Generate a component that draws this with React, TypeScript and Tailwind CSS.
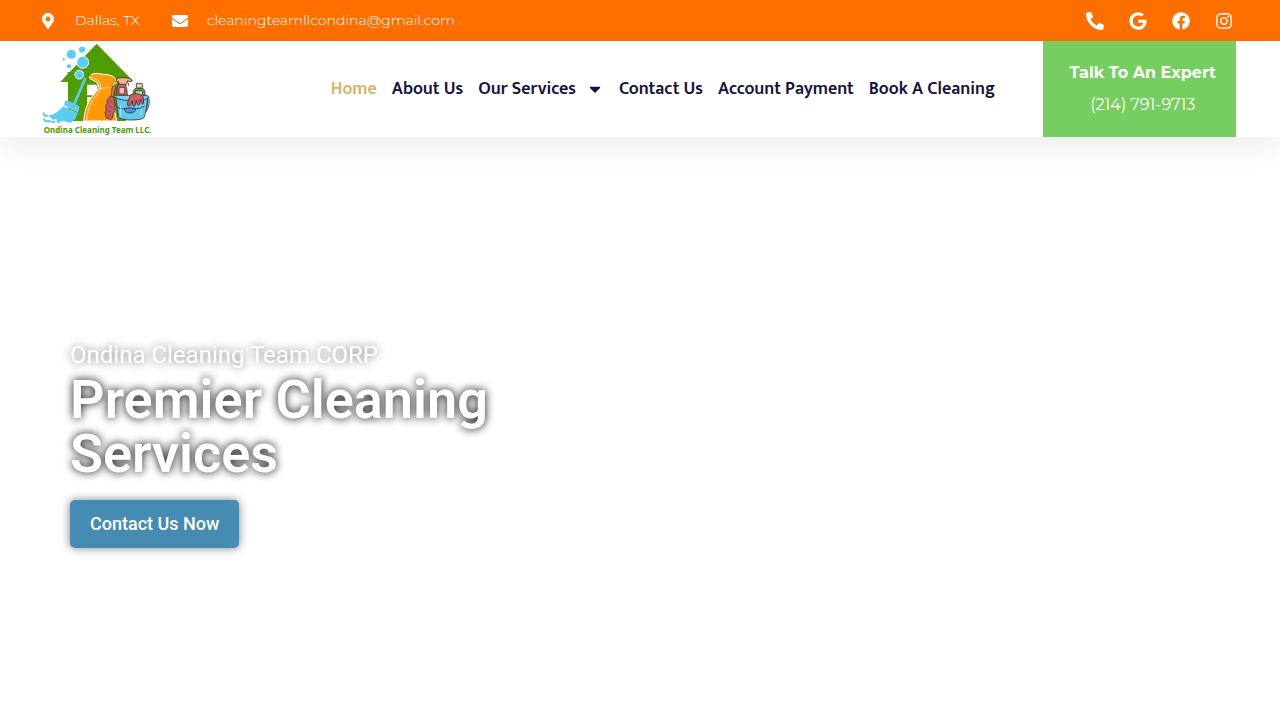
import { FaCaretDown, FaEnvelope, FaFacebook, FaGoogle, FaInstagram, FaMapMarkerAlt, FaPhoneAlt } from "react-icons/fa";

const socials = [
  { label: "Phone", href: "tel:+12147919713", Icon: FaPhoneAlt },
  { label: "Google", href: "#google", Icon: FaGoogle },
  { label: "Facebook", href: "#facebook", Icon: FaFacebook },
  { label: "Instagram", href: "#instagram", Icon: FaInstagram },
];

const links = [
  { label: "Home", active: true },
  { label: "About Us" },
  { label: "Our Services", menu: true },
  { label: "Contact Us" },
  { label: "Account Payment" },
  { label: "Book A Cleaning" },
];

function Logo() {
  return (
    <svg viewBox="36 15 336 288" className="h-24 w-28" role="img" aria-label="Ondina Cleaning Team LLC.">
      {/* House */}
      <path d="M200 23 L310 136 H288 V255 H114 V138 H91 L113 114 V108 H119 Z" fill="#4f9c05" />
      <path d="M171 146 H202 V178 H171 Z M171 183 H202 V214 H171 Z" fill="#fff" />
      {/* Bubbles */}
      <g fill="#5bcbf7" stroke="#fff" strokeWidth="3">
        <circle cx="124" cy="55" r="15" />
        <circle cx="156" cy="41" r="11" />
        <circle cx="158" cy="79" r="18" />
        <circle cx="117" cy="91" r="8" />
        <circle cx="148" cy="116" r="13" />
        <circle cx="101" cy="70" r="5" />
      </g>
      {/* Broom */}
      <path d="M165 129 L131 208" stroke="#5bcbf7" strokeWidth="8" strokeLinecap="round" />
      <path d="M105 196 Q110 191 118 196 L143 208 Q150 212 147 219 L144 227 L102 208 Z" fill="#5bcbf7" />
      <path d="M101 208 L144 227" stroke="#fff" strokeWidth="1.5" />
      <path d="M99 211 L143 230 Q139 250 121 261 Q108 258 102 254 L94 257 Q83 255 78 249 L69 251 Q62 247 59 239 Q85 231 99 211 Z" fill="#5bcbf7" />
      <path d="M41 232 Q42 241 51 239 M42 251 Q48 259 59 255 M59 239 Q66 246 73 243 M65 257 H73 M82 255 L87 259" stroke="#5bcbf7" strokeWidth="6" strokeLinecap="round" fill="none" />
      {/* Large spray bottle */}
      <path d="M178 122 Q184 112 199 112 L237 117 Q249 119 257 127 L260 139 L252 147 Q244 164 246 185 L260 255 H161 Q164 210 188 180 L207 157 Q207 146 199 138 L180 128 Z" fill="#ff9b08" stroke="#fff" strokeWidth="3" />
      <path d="M207 158 L244 154" stroke="#fff" strokeWidth="1.5" />
      <path d="M183 123 L203 133 Q214 143 212 158 Q206 173 193 187 Q173 212 170 253" stroke="#fff" strokeWidth="2" fill="none" />
      <g stroke="#3d3030" strokeWidth="2.5" strokeLinejoin="round">
        {/* Red spray bottle */}
        <path d="M266 141 Q258 160 260 181 H292 Q293 159 284 141 Z" fill="#d65a62" />
        <path d="M260 127 Q278 122 298 127 L306 132 L302 138 L293 134 L289 145 H267 L266 137 L259 136 Z" fill="#f2b391" />
        <path d="M292 137 Q297 142 295 150" fill="none" />
        <rect x="267" y="154" width="17" height="20" rx="3" fill="#f4c0b5" />
        {/* Green bottle */}
        <path d="M319 156 Q309 159 309 181 H345 Q347 159 336 156 Z" fill="#55aa62" />
        <rect x="319" y="142" width="18" height="14" rx="2" fill="#f4d29b" />
        <rect x="316" y="164" width="22" height="14" rx="2" fill="#b9dd9d" />
        {/* Bucket */}
        <path d="M354 184 Q360 209 344 229" fill="none" strokeWidth="7" />
        <path d="M354 184 Q360 209 344 229" fill="none" stroke="#62c9f0" strokeWidth="3" />
        <path d="M258 182 H353 Q350 223 342 245 Q335 252 302 252 Q272 251 265 243 Z" fill="#62c9f0" />
        <path d="M253 180 Q254 177 264 178 H350 Q359 180 354 186 Q346 194 302 194 Q261 193 253 180 Z" fill="#74d3f4" />
        <path d="M259 213 Q272 219 285 219 Q300 214 315 219 Q333 218 344 210" fill="none" />
        <path d="M283 218 Q300 213 316 218 Q317 230 300 231 Q283 230 283 218 Z" fill="#4a91dc" />
        {/* Glove */}
        <path d="M304 175 Q326 169 339 181 L341 201 Q338 208 334 201 L331 190 L329 205 Q324 211 321 202 L319 193 L315 209 Q309 215 307 205 L308 193 L301 208 Q292 213 292 204 L297 187 Z" fill="#d65a62" />
        {/* Duster */}
        <path d="M247 152 Q255 146 257 153 L249 184 H243 Z" fill="#e3833e" />
        <path d="M239 183 L245 180 L250 185 L254 191 L252 198 L256 206 L252 215 L254 224 L249 235 L247 245 L241 252 L235 247 L229 246 L227 238 L225 230 L229 220 L227 210 L232 202 L231 193 Z" fill="#cf5962" />
        <path d="M240 193 L245 198 M237 209 L244 214 M234 224 L243 228 M235 238 L240 240" fill="none" strokeWidth="2" />
        <path d="M272 208 V240 M335 217 L331 240" fill="none" stroke="#a4e7fb" strokeWidth="3" />
      </g>
      <text x="203" y="292" textAnchor="middle" fill="#4f9c05" className="font-['Noto_Sans',sans-serif] text-[24px] font-bold">Ondina Cleaning Team LLC.</text>
    </svg>
  );
}

export default function App() {
  return (
    <div className="min-h-screen bg-white font-['Montserrat','Inter',sans-serif]">
      <div className="flex h-[41px] items-center justify-between bg-[#ff6f00] pr-[47px] pl-10 text-white">
        <address className="flex items-center gap-8 text-sm leading-[21px] font-light not-italic">
          <span className="flex items-center gap-[19px]">
            <FaMapMarkerAlt className="size-4" aria-hidden="true" />
            <span>Dallas, TX</span>
          </span>
          <a href="mailto:cleaningteamllcondina@gmail.com" className="flex items-center gap-[19px]">
            <FaEnvelope className="size-4" aria-hidden="true" />
            <span>cleaningteamllcondina@gmail.com</span>
          </a>
        </address>
        <div className="flex items-center gap-[25px]">
          {socials.map(({ label, href, Icon }) => (
            <a key={label} href={href} aria-label={label}>
              <Icon className="size-[18px]" />
            </a>
          ))}
        </div>
      </div>

      <header className="flex h-24 items-center justify-between bg-white pr-11 pl-[42px] shadow-[0_10px_30px_0_rgba(0,0,0,0.08)]">
        <a href="#home"><Logo /></a>
        <div className="flex h-full items-center gap-12">
          <nav className="flex items-center gap-[15px] font-['Mukta','Noto_Sans',sans-serif] text-lg font-semibold text-[#14123f]">
            {links.map(({ label, active, menu }) => (
              <a key={label} href="#" className={active ? "text-[#d5b26d]" : "flex items-center gap-[10px]"}>
                {label}
                {menu && <FaCaretDown className="size-[18px]" aria-hidden="true" />}
              </a>
            ))}
          </nav>
          <div className="flex h-full w-[193px] flex-col items-end justify-center bg-[#76ce60] pr-5 text-base leading-8 text-white">
            <div className="text-center">
              <p className="font-bold">Talk To An Expert</p>
              <a href="tel:+12147919713">(214) 791-9713</a>
            </div>
          </div>
        </div>
      </header>

      <main className="px-[70px] pt-[202px] font-['Roboto',sans-serif] text-white">
        <p className="mb-0.5 text-2xl leading-8 [text-shadow:0_0_10px_rgba(0,0,0,0.6)]">Ondina Cleaning Team CORP</p>
        <h1 className="max-w-[500px] text-[54px] leading-[54px] font-semibold [text-shadow:0_0_10px_rgba(0,0,0,1)]">Premier Cleaning Services</h1>
        <a href="#contact" className="mt-[19px] inline-flex h-12 items-center rounded-[5px] bg-[#468bb2] px-5 text-lg font-medium shadow-[0_0_10px_0_rgba(0,0,0,0.5)]">Contact Us Now</a>
      </main>
    </div>
  );
}
